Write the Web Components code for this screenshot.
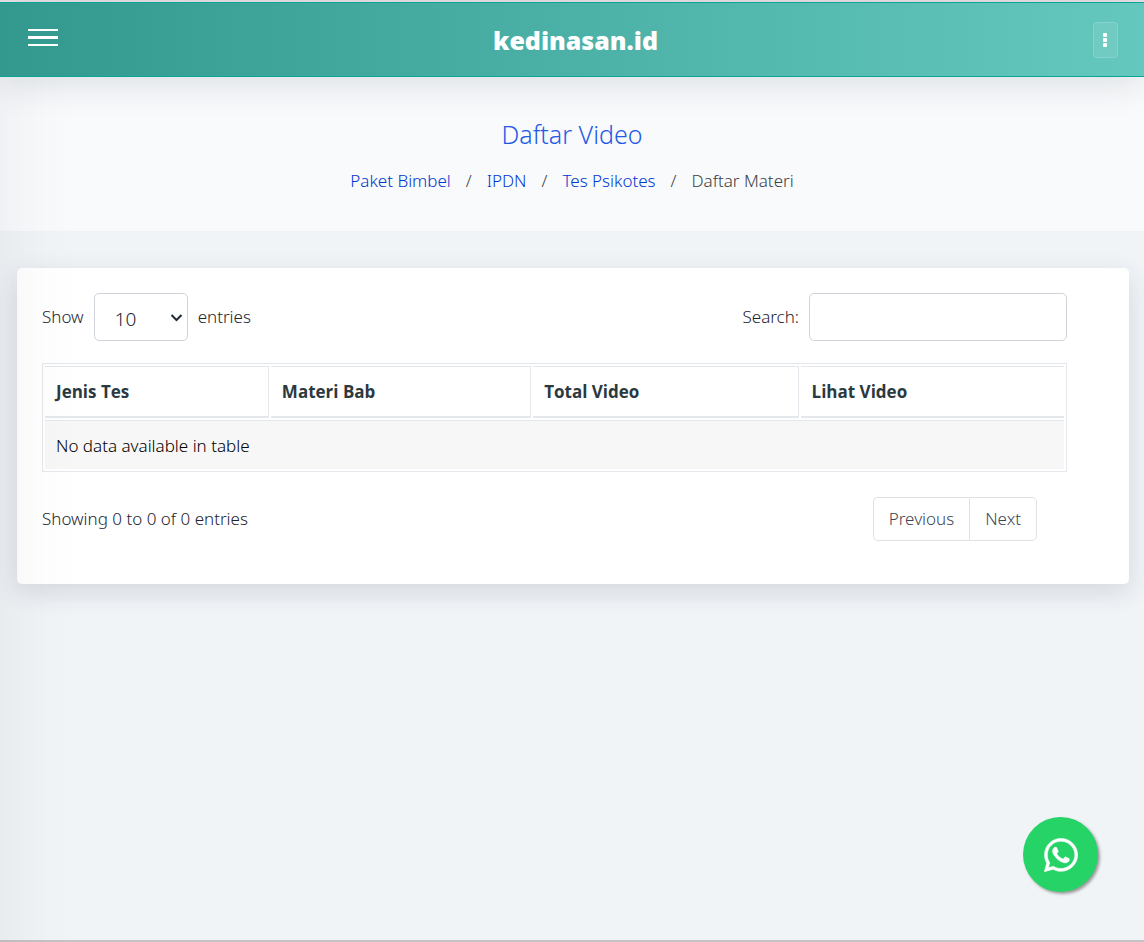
<!DOCTYPE html>
<html lang="id">
<head>
<meta charset="utf-8">
<meta name="viewport" content="width=device-width, initial-scale=1">
<title>Daftar Video - kedinasan.id</title>
<style>
  html, body { margin: 0; }
  body { background: #f0f4f7; font: 300 17px/24px "Noto Sans", "Open Sans", sans-serif; color: #1c2530; }
</style>
</head>
<body>
<app-shell>
  <app-header slot="header">kedinasan.id</app-header>
  <page-title heading="Daftar Video">
    <crumb-item href="#paket">Paket Bimbel</crumb-item>
    <crumb-item href="#ipdn">IPDN</crumb-item>
    <crumb-item href="#psikotes">Tes Psikotes</crumb-item>
    <crumb-item>Daftar Materi</crumb-item>
  </page-title>
  <content-card><data-grid></data-grid></content-card>
  <whatsapp-button slot="float"></whatsapp-button>
</app-shell>
<script>
const define = (name, render) => customElements.define(name, class extends HTMLElement {
  connectedCallback() {
    if (!this.shadowRoot) this.attachShadow({ mode: 'open' }).innerHTML = render(this);
  }
});

define('app-shell', () => `
  <style>
    :host { display: flex; flex-direction: column; box-sizing: border-box; min-height: 100vh; border-top: 2px solid #eadfe6; border-bottom: 2px solid #c4c4c8; }
    main { flex: 1; }
    .edge { position: fixed; inset: 77px auto 0 0; width: 76px; pointer-events: none; background: linear-gradient(90deg, rgba(40,45,60,.04), rgba(40,45,60,.012) 50%, transparent); }
  </style>
  <slot name="header"></slot>
  <main><slot></slot></main>
  <div class="edge"></div>
  <slot name="float"></slot>`);

define('app-header', () => `
  <style>
    :host { display: block; position: relative; z-index: 1; box-shadow: 0 6px 36px rgba(30,35,50,.13); }
    header { display: flex; align-items: center; justify-content: space-between; box-sizing: border-box; height: 75px; padding: 0 26px 0 28px;
      background: linear-gradient(90deg, #33998e, #64c8be); border: solid #0ba594; border-width: 1px 0; }
    button { display: block; margin: 0; padding: 0; border: 0; background: none; color: #fff; }
    svg { display: block; }
    .brand { color: #fff; font: 900 25px/32px "Noto Sans", sans-serif; }
    .more { display: grid; place-items: center; box-sizing: border-box; width: 25px; height: 36px; border: 1px solid #85d3cb; border-radius: 4px; background: #72cbc3; }
    .menu { padding-bottom: 4px; }
  </style>
  <header>
    <button class="menu" aria-label="Menu"><svg width="30" height="18" fill="#fff"><path d="M0 0h30v2H0zM0 7h30v3H0zM0 15h30v2H0z"/></svg></button>
    <span class="brand"><slot></slot></span>
    <button class="more" aria-label="Opsi"><svg width="4" height="14" fill="#fff"><rect width="4" height="4" rx="1"/><rect y="5" width="4" height="4" rx="1"/><rect y="10" width="4" height="4" rx="1"/></svg></button>
  </header>`);

define('page-title', el => `
  <style>
    :host { display: block; background: #f8fafc; padding: 41px 16px 37px; text-align: center; }
    h1 { margin: 0 0 18px; font-size: 25px; line-height: 32px; font-weight: 300; color: #2459e6; }
    nav { display: flex; justify-content: center; line-height: 26px; }
  </style>
  <h1>${el.getAttribute('heading')}</h1>
  <nav aria-label="Breadcrumb"><slot></slot></nav>`);

define('crumb-item', el => `
  <style>
    :host { display: block; color: #3a4147; }
    :host(:not(:last-child))::after { content: "/"; padding: 0 15px; }
    a { color: #0037d0; text-decoration: none; }
  </style>${el.hasAttribute('href') ? `<a href="${el.getAttribute('href')}"><slot></slot></a>` : '<slot></slot>'}`);

define('content-card', () => `
  <style>
    :host { display: block; margin: 37px 15px 40px 17px; padding: 25px 62px 43px 25px; background: #fff; border-radius: 5px; box-shadow: 0 8px 26px rgba(40,50,70,.14); }
  </style><slot></slot>`);

define('data-grid', () => `
  <style>
    :host { display: block; }
    .bar { display: flex; justify-content: space-between; align-items: center; }
    label { display: flex; align-items: center; gap: 10px; }
    select, input { box-sizing: border-box; height: 48px; margin: 0; border: 1px solid #ced4da; border-radius: 5px; background: #fff; color: inherit; font: inherit; font-size: 19px; }
    .pick { display: grid; align-items: center; }
    .pick > * { grid-area: 1 / 1; }
    .pick svg { justify-self: end; margin-right: 5px; pointer-events: none; }
    select { appearance: none; width: 94px; padding: 4px 20px 0; }
    input { width: 258px; padding: 0 16px; }
    table { width: 100%; margin: 22px 0 25px; table-layout: fixed; border: 1px solid #e4e8ec; border-collapse: separate; border-spacing: 2px; line-height: 25px; }
    th, td { box-sizing: border-box; padding: 12px 11px; text-align: left; border-top: 1px solid #e4e8ec; }
    th { font-weight: 700; font-family: "Open Sans", sans-serif; color: #2b3940; border-bottom: 2px solid #e4e8ec; }
    th:not(:last-child) { border-right: 1px solid #e4e8ec; }
    td { background: #f7f7f7; padding-bottom: 11px; color: #000; }
    .c1 { width: 22.1%; } .c2 { width: 25.7%; } .c3 { width: 26.2%; }
    .pages { display: flex; margin-right: 30px; }
    .pages button { box-sizing: border-box; height: 44px; margin: 0; padding: 0 15px; border: 1px solid #dee2e6; background: #fff; font: inherit; color: #3c4653; }
    .pages button:first-child { border-radius: 5px 0 0 5px; border-right: 0; }
    .pages button:last-child { border-radius: 0 5px 5px 0; }
  </style>
  <div class="bar">
    <label>Show
      <span class="pick"><select><option>10</option><option>25</option><option>50</option><option>100</option></select>
      <svg width="13" height="10" fill="none" stroke="#212b36" stroke-width="2"><path d="M1.500 3l5 5 5-5"/></svg></span>
      entries</label>
    <label>Search:<input type="search"></label>
  </div>
  <table>
    <thead><tr><th class="c1">Jenis Tes</th><th class="c2">Materi Bab</th><th class="c3">Total Video</th><th>Lihat Video</th></tr></thead>
    <tbody><tr><td colspan="4">No data available in table</td></tr></tbody>
  </table>
  <div class="bar">
    <span>Showing 0 to 0 of 0 entries</span>
    <div class="pages"><button>Previous</button><button>Next</button></div>
  </div>`);

define('whatsapp-button', () => `
  <style>
    :host { position: fixed; right: 46px; bottom: 50px; }
    a { display: grid; place-items: center; width: 75px; height: 75px; border-radius: 50%; background: #25d366; box-shadow: 2px 2px 3px #999; }
    svg { display: block; }
  </style>
  <a href="#whatsapp" aria-label="WhatsApp"><svg width="34" height="38" viewBox="0 0 448 512" fill="#fff" stroke="#fff" stroke-width="8"><path d="M380.900 97.100C339 55.100 283.200 32 223.900 32c-122.400 0-222 99.600-222 222 0 39.100 10.200 77.300 29.600 111L0 480l117.700-30.900c32.400 17.700 68.900 27 106.100 27h.1c122.300 0 224.100-99.600 224.100-222 0-59.300-25.200-115-67.100-157zm-157 341.600c-33.200 0-65.700-8.900-94-25.700l-6.700-4-69.800 18.300L72 359.200l-4.400-7c-18.500-29.400-28.200-63.300-28.200-98.200 0-101.700 82.800-184.500 184.600-184.500 49.300 0 95.600 19.200 130.400 54.100 34.800 34.900 56.200 81.200 56.100 130.500 0 101.800-84.900 184.600-186.600 184.600zm101.200-138.200c-5.500-2.800-32.800-16.200-37.900-18-5.100-1.900-8.800-2.800-12.500 2.800-3.700 5.600-14.300 18-17.600 21.800-3.200 3.700-6.500 4.200-12 1.400-32.600-16.300-54-29.100-75.500-66-5.700-9.800 5.700-9.100 16.300-30.300 1.800-3.700.9-6.900-.5-9.700-1.400-2.800-12.500-30.100-17.100-41.200-4.500-10.800-9.100-9.300-12.500-9.500-3.200-.2-6.900-.2-10.600-.2-3.700 0-9.700 1.400-14.800 6.900-5.100 5.600-19.400 19-19.400 46.300 0 27.300 19.900 53.700 22.600 57.400 2.800 3.700 39.100 59.700 94.800 83.800 35.200 15.200 49 16.500 66.600 13.900 10.700-1.600 32.800-13.400 37.400-26.400 4.600-13 4.600-24.100 3.200-26.400-1.300-2.500-5-3.900-10.500-6.600z"/></svg></a>`);
</script>
</body>
</html>
